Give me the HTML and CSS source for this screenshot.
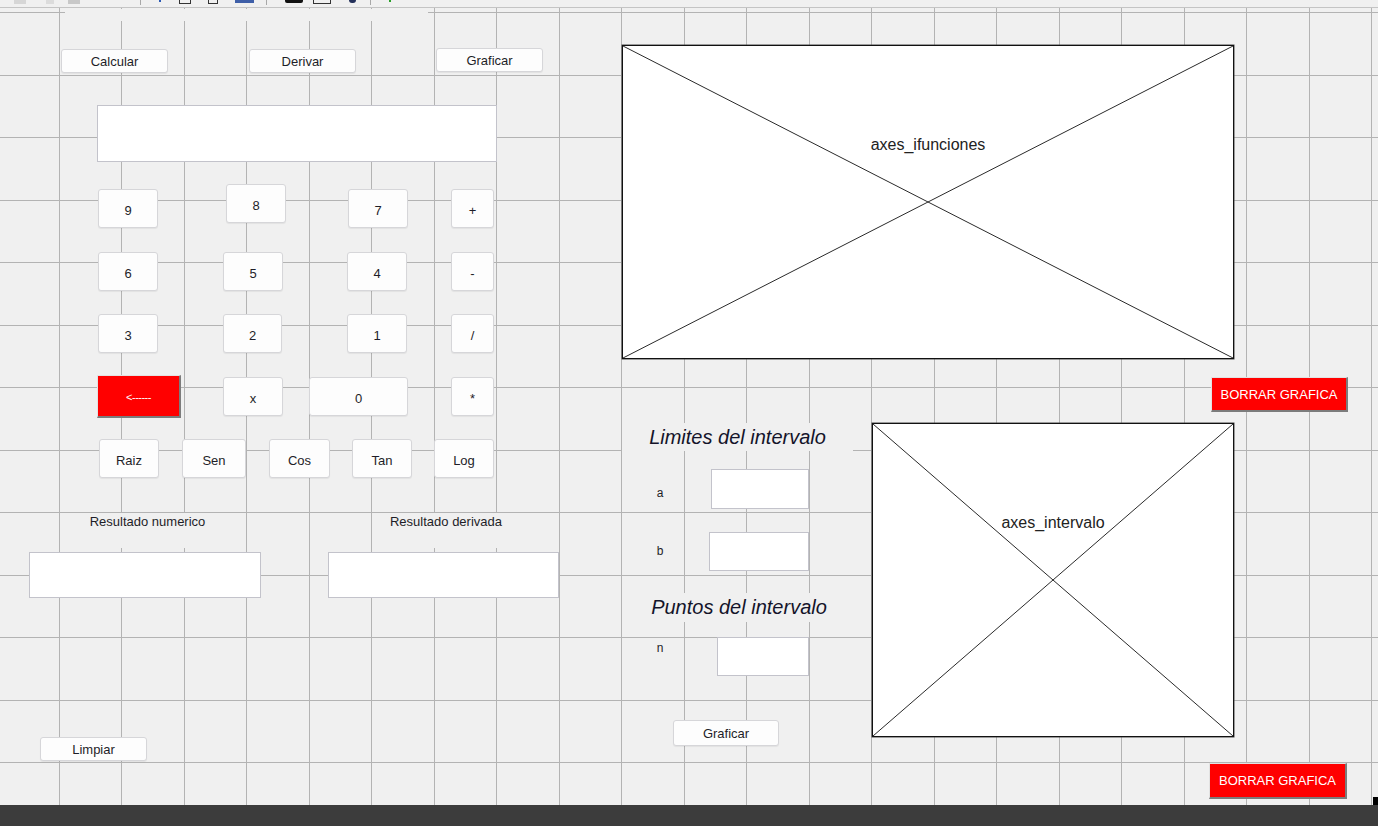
FILE: index.html
```html
<!DOCTYPE html>
<html lang="es">
<head>
<meta charset="utf-8">
<title>GUIDE - calculadora</title>
<link rel="stylesheet" href="styles.css">
</head>
<body>
<div class="toolbar">
  <span class="tb tb-g1"></span><span class="tb tb-g2"></span><span class="tb tb-g3"></span>
  <span class="tb-sep"></span>
  <span class="tb tb-blue"></span><span class="tb tb-box"></span><span class="tb tb-box2"></span><span class="tb tb-bar"></span>
  <span class="tb-sep"></span>
  <span class="tb tb-blk"></span><span class="tb tb-box3"></span><span class="tb tb-drop"></span>
  <span class="tb-sep"></span>
  <span class="tb tb-green"></span>
</div>

<div class="canvas">
  <div class="cover" style="left:65px;top:1px;width:363px;height:12px"></div>

  <div class="btn" style="left:61px;top:41px;width:107px;height:24px">Calcular</div>
  <div class="btn" style="left:249px;top:41px;width:107px;height:24px">Derivar</div>
  <div class="btn" style="left:436px;top:40px;width:107px;height:24px">Graficar</div>

  <div class="edit" style="left:97px;top:97px;width:400px;height:57px"></div>

  <div class="btn key" style="left:98px;top:181px;width:60px;height:39px">9</div>
  <div class="btn key" style="left:226px;top:176px;width:60px;height:39px">8</div>
  <div class="btn key" style="left:348px;top:181px;width:60px;height:39px">7</div>
  <div class="btn key" style="left:451px;top:181px;width:43px;height:39px">+</div>

  <div class="btn key" style="left:98px;top:244px;width:60px;height:39px">6</div>
  <div class="btn key" style="left:223px;top:244px;width:60px;height:39px">5</div>
  <div class="btn key" style="left:347px;top:244px;width:60px;height:39px">4</div>
  <div class="btn key" style="left:451px;top:244px;width:43px;height:39px">-</div>

  <div class="btn key" style="left:98px;top:306px;width:60px;height:39px">3</div>
  <div class="btn key" style="left:223px;top:306px;width:59px;height:39px">2</div>
  <div class="btn key" style="left:347px;top:306px;width:60px;height:39px">1</div>
  <div class="btn key" style="left:451px;top:306px;width:43px;height:39px">/</div>

  <div class="btn-red back" style="left:97px;top:367px;width:84px;height:43px">&lt;------</div>
  <div class="btn key" style="left:223px;top:369px;width:60px;height:39px">x</div>
  <div class="btn key" style="left:309px;top:369px;width:99px;height:39px">0</div>
  <div class="btn key" style="left:451px;top:369px;width:43px;height:39px">*</div>

  <div class="btn key" style="left:99px;top:431px;width:60px;height:39px">Raiz</div>
  <div class="btn key" style="left:182px;top:431px;width:64px;height:39px">Sen</div>
  <div class="btn key" style="left:269px;top:431px;width:61px;height:39px">Cos</div>
  <div class="btn key" style="left:352px;top:431px;width:60px;height:39px">Tan</div>
  <div class="btn key" style="left:434px;top:431px;width:60px;height:39px">Log</div>

  <div class="label" style="left:73px;top:505px;width:149px;height:35px">Resultado numerico</div>
  <div class="label" style="left:372px;top:505px;width:148px;height:35px">Resultado derivada</div>
  <div class="edit" style="left:29px;top:544px;width:232px;height:46px"></div>
  <div class="edit" style="left:328px;top:544px;width:231px;height:46px"></div>

  <div class="btn" style="left:40px;top:729px;width:107px;height:24px">Limpiar</div>

  <div class="axes" style="left:622px;top:37px;width:612px;height:314px">
    <svg class="cross" viewBox="0 0 100 100" preserveAspectRatio="none"><line x1="0" y1="0" x2="100" y2="100"/><line x1="100" y1="0" x2="0" y2="100"/></svg>
    <span class="axes-name">axes_ifunciones</span>
  </div>

  <div class="btn-red" style="left:1211px;top:369px;width:137px;height:35px">BORRAR GRAFICA</div>

  <div class="label heading" style="left:622px;top:415px;width:231px;height:28px">Limites del intervalo</div>
  <div class="label small" style="left:645px;top:477px;width:30px;height:20px">a</div>
  <div class="edit" style="left:711px;top:461px;width:98px;height:40px"></div>
  <div class="label small" style="left:645px;top:535px;width:30px;height:20px">b</div>
  <div class="edit" style="left:709px;top:524px;width:100px;height:39px"></div>

  <div class="label heading" style="left:622px;top:585px;width:234px;height:29px">Puntos del intervalo</div>
  <div class="label small" style="left:645px;top:632px;width:30px;height:20px">n</div>
  <div class="edit" style="left:717px;top:629px;width:92px;height:39px"></div>

  <div class="btn" style="left:673px;top:712px;width:106px;height:26px">Graficar</div>

  <div class="axes" style="left:872px;top:415px;width:362px;height:314px">
    <svg class="cross" viewBox="0 0 100 100" preserveAspectRatio="none"><line x1="0" y1="0" x2="100" y2="100"/><line x1="100" y1="0" x2="0" y2="100"/></svg>
    <span class="axes-name">axes_intervalo</span>
  </div>

  <div class="btn-red" style="left:1209px;top:755px;width:138px;height:36px">BORRAR GRAFICA</div>

  <div class="handle"></div>
</div>

<div class="statusbar"></div>
</body>
</html>
```
FILE: styles.css
```css
* { box-sizing: border-box; }

html, body {
  margin: 0;
  padding: 0;
  width: 1378px;
  height: 826px;
  overflow: hidden;
  background: #f0f0f0;
  font-family: "Liberation Sans", Arial, sans-serif;
  color: #1e1e28;
}

body {
  display: flex;
  flex-direction: column;
}

/* ---------- cut-off toolbar ---------- */
.toolbar {
  height: 8px;
  flex: none;
  display: flex;
  align-items: flex-start;
  gap: 0;
  padding-left: 14px;
  background: #f0f0f0;
  border-bottom: 1px solid #c4c4c4;
  overflow: hidden;
}
.tb { display: block; height: 4px; margin-right: 10px; }
.tb-g1 { width: 12px; background: #d6d6d6; }
.tb-g2 { width: 8px; background: #dcdcdc; margin-left: 10px; }
.tb-g3 { width: 12px; background: #c8c8c8; margin-left: 4px; margin-right: 60px; }
.tb-sep { display: block; width: 1px; height: 5px; background: #a8a8a8; margin-right: 18px; }
.tb-blue { width: 2px; height: 2px; background: #2d5bb5; margin-right: 18px; }
.tb-box { width: 12px; border: 1px solid #333; border-top: none; margin-right: 17px; }
.tb-box2 { width: 10px; border: 1px solid #333; border-top: none; margin-right: 17px; }
.tb-bar { width: 19px; height: 3px; background: #3f5fa8; margin-right: 12px; }
.tb-blk { width: 18px; height: 3px; background: #111; border-radius: 0 0 2px 2px; margin-right: 10px; }
.tb-box3 { width: 18px; border: 1px solid #333; border-top: none; margin-right: 18px; }
.tb-drop { width: 7px; height: 3px; background: #23305a; border-radius: 0 0 4px 4px; margin-right: 14px; }
.tb-green { width: 2px; height: 2px; background: #2aa02a; }

/* ---------- layout editor canvas ---------- */
.canvas {
  position: relative;
  flex: none;
  height: 797px;
  background-color: #f0f0f0;
  background-image:
    repeating-linear-gradient(to right, transparent 0 59px, #b3b3b3 59px 60px, transparent 60px 62.5px),
    repeating-linear-gradient(to bottom, transparent 0 4px, #b3b3b3 4px 5px, transparent 5px 62.5px);
  overflow: hidden;
}

.cover {
  position: absolute;
  background: #f0f0f0;
}

.btn {
  position: absolute;
  display: flex;
  align-items: center;
  justify-content: center;
  padding-top: 1px;
  background: #fdfdfd;
  border: 1px solid #d6d6d9;
  border-radius: 3px;
  box-shadow: 0 1px 1px rgba(0, 0, 0, 0.06);
  font-size: 13px;
  color: #1e1e28;
  white-space: nowrap;
}
.key { padding-top: 3px; }

.btn-red {
  position: absolute;
  display: flex;
  align-items: center;
  justify-content: center;
  background: #ff0000;
  border-top: 1px solid #e2e2e2;
  border-left: 1px solid #e2e2e2;
  border-right: 2px solid #7c7c7c;
  border-bottom: 2px solid #7c7c7c;
  color: #ffffff;
  font-size: 13px;
  white-space: nowrap;
}
.back { font-size: 11px; letter-spacing: -0.5px; padding-top: 2px; }

.edit {
  position: absolute;
  background: #ffffff;
  border: 1px solid #c3c3cb;
}

.label {
  position: absolute;
  display: flex;
  justify-content: center;
  align-items: flex-start;
  background: #f0f0f0;
  font-size: 13px;
  line-height: 17px;
  color: #1e1e28;
  white-space: nowrap;
}
.label.small { background: transparent; font-size: 12px; line-height: 16px; }
.label.heading {
  font-size: 20px;
  font-style: italic;
  line-height: 23px;
  padding-top: 3px;
  color: #14142a;
}

.axes {
  position: absolute;
  background: #ffffff;
  border: 1px solid #111;
  box-shadow: 0 0 0 0.5px #444;
}
.cross {
  position: absolute;
  inset: 0;
  width: 100%;
  height: 100%;
}
.cross line {
  stroke: #2a2a2a;
  stroke-width: 1;
  vector-effect: non-scaling-stroke;
}
.axes-name {
  position: absolute;
  left: 0;
  right: 0;
  top: 89px;
  text-align: center;
  font-size: 16px;
  line-height: 19px;
  color: #222;
  background: transparent;
}

.handle {
  position: absolute;
  right: 0;
  bottom: 0;
  width: 5px;
  height: 8px;
  background: #000;
}

/* ---------- bottom bar ---------- */
.statusbar {
  flex: none;
  height: 21px;
  background: #3c3c3c;
}
```
